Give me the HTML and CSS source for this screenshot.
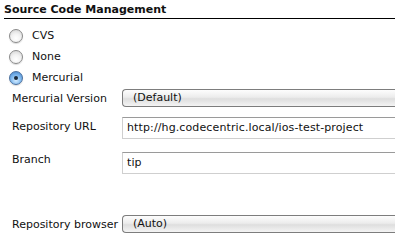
FILE: index.html
```html
<!DOCTYPE html>
<html lang="en">
<head>
    <meta charset="UTF-8">
    <title>Source Code Management</title>
    <link rel="stylesheet" href="styles.css">
</head>
<body>
    <div class="section">
        <div class="section-title">Source Code Management</div>
        <div class="radios">
            <label class="radio"><span class="dot"></span>CVS</label>
            <label class="radio"><span class="dot"></span>None</label>
            <label class="radio"><span class="dot checked"></span>Mercurial</label>
        </div>
        <div class="fields">
            <div class="field version">
                <span class="label">Mercurial Version</span>
                <div class="select">(Default)</div>
            </div>
            <div class="field url">
                <span class="label">Repository URL</span>
                <div class="input">http://hg.codecentric.local/ios-test-project</div>
            </div>
            <div class="field branch">
                <span class="label">Branch</span>
                <div class="input">tip</div>
            </div>
            <div class="field browser">
                <span class="label">Repository browser</span>
                <div class="select">(Auto)</div>
            </div>
        </div>
    </div>
</body>
</html>
```

FILE: styles.css
```css
body {
    margin: 0;
    background: #fff;
    font-family: "DejaVu Sans", Verdana, sans-serif;
    font-size: 11px;
    color: #111;
    overflow: hidden;
}

.section-title {
    font-weight: bold;
    font-size: 11px;
    margin-left: 4px;
    padding-top: 3px;
    padding-bottom: 2px;
    border-bottom: 1px solid #000;
}

.radios {
    display: flex;
    flex-direction: column;
    padding: 10px 0 0 9px;
    gap: 8px;
}

.radio {
    display: flex;
    align-items: center;
    gap: 9px;
    height: 13px;
}

.dot {
    width: 12px;
    height: 12px;
    border-radius: 50%;
    border: 1px solid #8a8a8a;
    background: radial-gradient(circle at 50% 70%, #ffffff 0%, #f2f2f2 45%, #cfcfcf 100%);
    box-shadow: 0 1px 1px rgba(0, 0, 0, 0.15);
    position: relative;
}

.dot.checked {
    border-color: #4a6f9e;
    background: radial-gradient(circle at 50% 70%, #d5ecff 0%, #86bdf0 45%, #3d7fc8 100%);
}

.dot.checked::after {
    content: "";
    position: absolute;
    left: 4px;
    top: 4px;
    width: 4px;
    height: 4px;
    border-radius: 50%;
    background: #1b2a3a;
}

.fields {
    display: flex;
    flex-direction: column;
    padding: 5px 0 0 12px;
}

.field {
    display: grid;
    grid-template-columns: 110px 1fr;
    align-items: start;
}

.label {
    padding-top: 3px;
}

.select {
    height: 16px;
    line-height: 16px;
    border: 1px solid #7d7d7d;
    border-right: none;
    border-radius: 4px 0 0 4px;
    padding-left: 10px;
    background: linear-gradient(#fdfdfd, #ececec 45%, #dedede 55%, #f4f4f4);
}

.input {
    height: 20px;
    line-height: 20px;
    border: 1px solid #cfcfcf;
    border-top-color: #9a9a9a;
    border-right: none;
    padding-left: 4px;
    letter-spacing: 0.12px;
}

.version {
    margin-bottom: 10px;
}

.url {
    margin-bottom: 13px;
}

.branch .label {
    padding-top: 1px;
}

.browser {
    margin-top: 41px;
}
```
